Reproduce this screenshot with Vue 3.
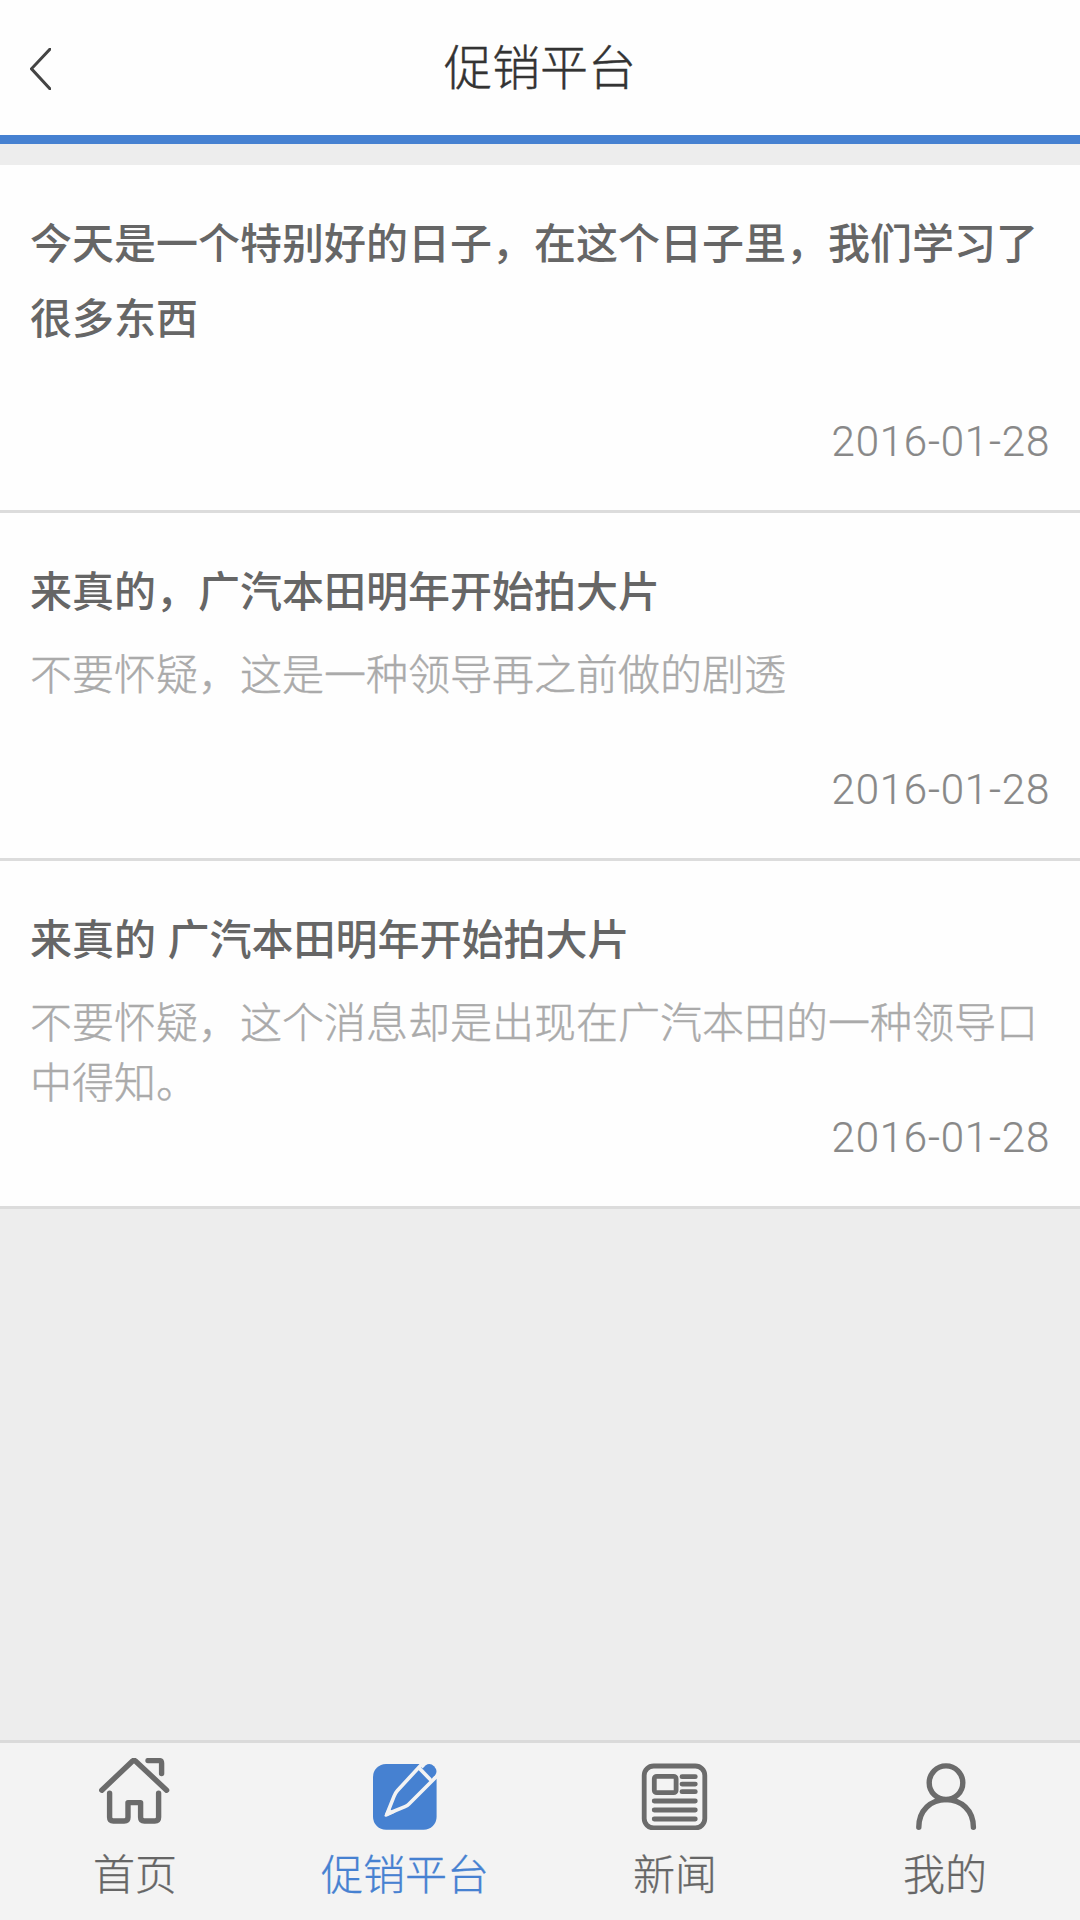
<script setup>
import { ref } from 'vue'

const articles = ref([
    {
        id: 1,
        title: '今天是一个特别好的日子，在这个日子里，我们学习了很多东西',
        desc: '',
        date: '2016-01-28'
    },
    {
        id: 2,
        title: '来真的，广汽本田明年开始拍大片',
        desc: '不要怀疑，这是一种领导再之前做的剧透',
        date: '2016-01-28'
    },
    {
        id: 3,
        title: '来真的 广汽本田明年开始拍大片',
        desc: '不要怀疑，这个消息却是出现在广汽本田的一种领导口中得知。',
        date: '2016-01-28'
    }
])

const tabs = [
    { name: 'home', label: '首页' },
    { name: 'promo', label: '促销平台' },
    { name: 'news', label: '新闻' },
    { name: 'mine', label: '我的' }
]

const active = ref('promo')
</script>


<template>
    <div class="page">
        <header class="header">
            <div class="back">
                <svg viewBox="0 0 21 42">
                    <path d="M21.5 -0.5L1.5 20.8L21.5 42.5" />
                </svg>
            </div>
            <h1>促销平台</h1>
        </header>

        <main class="list">
            <article class="item" v-for="item in articles" :key="item.id">
                <h2>{{ item.title }}</h2>
                <p v-if="item.desc">{{ item.desc }}</p>
                <time>{{ item.date }}</time>
            </article>
        </main>

        <nav class="tabbar">
            <div class="tab" v-for="tab in tabs" :key="tab.name" :class="{ active: active == tab.name }" @click="active = tab.name">
                <svg v-if="tab.name == 'home'" class="icon" viewBox="0 0 72 72">
                    <path d="M2.8 32.2L33.6 3Q35 1.8 36.4 3L67.6 32.2" />
                    <path d="M49 2.6H60Q62.6 2.6 62.6 5.2V15.6" />
                    <path d="M10.6 35.3V59.2Q10.6 63 14.4 63H25.2Q29 63 29 59.2V44.6H41.6V59.2Q41.6 63 45.4 63H55.8Q59.6 63 59.6 59.2V35.3" />
                </svg>
                <svg v-else-if="tab.name == 'promo'" class="icon pen" viewBox="0 0 72 72">
                    <rect x="4" y="6" width="63.6" height="65.8" rx="13" />
                    <path class="corner" d="M52 4H72V21L64 20L51 8Z" />
                    <path class="eraser" d="M53.6 10.4L56.5 7.4Q61 4.4 65 8.3Q69.4 13 66 17.5L63 20.2Z" />
                    <path class="outline" d="M52.5 6.5L28.5 32.5Q26.4 34.8 25 38.4L18 56L36 48.6Q38.4 47.6 40 46L67 19" />
                    <path class="outline" d="M50.5 10.5L61 21.3" />
                    <path class="nib" d="M19.4 49.5L15.4 57.4Q15.6 59.2 18 58.4L26.5 54.4L22.3 52.3Z" />
                </svg>
                <svg v-else-if="tab.name == 'news'" class="icon news" viewBox="0 0 72 72">
                    <rect x="5.2" y="8" width="60.6" height="62" rx="9.5" />
                    <rect x="15.3" y="18.3" width="21.8" height="16.4" rx="2.5" />
                    <path d="M43 18.7H56.3M43 26.1H56.3M43 33.7H56.3M15.2 43H56.3M15.2 52H56.3M15.2 61H56.3" />
                </svg>
                <svg v-else class="icon" viewBox="0 0 72 72">
                    <circle cx="37" cy="24.7" r="16.8" />
                    <path d="M9.8 69.3C9.8 52 22 41.6 37 41.6S64.4 52 64.4 69.3" />
                </svg>
                <span>{{ tab.label }}</span>
            </div>
        </nav>
    </div>
</template>


<style>
body {
    margin: 0;
    background: #ededed;
}
</style>

<style scoped>
.page {
    width: 100%;
    height: 100vh;
    display: flex;
    flex-direction: column;
    box-sizing: border-box;
    background: #ededed;
    font-family: "Noto Sans CJK SC", sans-serif;
    font-weight: 300;
}

.header {
    height: 144px;
    box-sizing: border-box;
    padding: 0 30px;
    display: grid;
    grid-template-columns: 21px 1fr 21px;
    align-items: center;
    background: #fefefe;
    border-bottom: 9px solid #4681d1;
}

.back {
    height: 42px;
    margin-top: 3px;
    cursor: pointer;
}

.back svg {
    display: block;
    width: 21px;
    height: 42px;
    fill: none;
    stroke: #444;
    stroke-width: 3;
}

.header h1 {
    margin: 0 0 8px;
    text-align: center;
    font-size: 48px;
    font-weight: 300;
    line-height: 72px;
    color: #333;
    -webkit-text-stroke: 0.4px;
}

.list {
    flex: 1;
    padding-top: 21px;
}

.item {
    height: 348px;
    box-sizing: border-box;
    padding: 38px 30px 40px;
    display: flex;
    flex-direction: column;
    background: #fefefe;
    border-bottom: 3px solid #dcdcdc;
}

.item h2 {
    margin: 0;
    font-size: 42px;
    font-weight: 500;
    line-height: 75px;
    word-spacing: 2px;
    color: #666;
}

.item p {
    margin: 16px 0 0;
    font-size: 42px;
    line-height: 60px;
    color: #aaa;
    -webkit-text-stroke: 0.4px;
}

.item time {
    margin-top: auto;
    align-self: flex-end;
    height: 56px;
    font-family: Roboto, "Liberation Sans", sans-serif;
    font-size: 42px;
    line-height: 56px;
    letter-spacing: 0.8px;
    color: #888;
    -webkit-text-stroke: 0.2px;
}

.tabbar {
    height: 180px;
    box-sizing: border-box;
    display: flex;
    background: #f3f3f3;
    border-top: 3px solid #dadada;
}

.tab {
    flex: 1;
    padding-top: 15px;
    display: flex;
    flex-direction: column;
    align-items: center;
    font-size: 42px;
    line-height: 60px;
    color: #666;
    cursor: pointer;
    -webkit-text-stroke: 0.3px;
}

.tab span {
    margin-top: 12px;
}

.tab.active {
    color: #4681d1;
}

.icon {
    width: 72px;
    height: 72px;
    fill: none;
    stroke: #6b6b6b;
    stroke-width: 5.4;
    stroke-linecap: round;
    stroke-linejoin: round;
}

.news {
    stroke-width: 4.8;
}

.pen {
    fill: #4681d1;
    stroke: none;
}

.pen .corner,
.pen .nib {
    fill: #f3f3f3;
}

.pen .outline {
    fill: none;
    stroke: #f3f3f3;
    stroke-width: 3.6;
}
</style>
